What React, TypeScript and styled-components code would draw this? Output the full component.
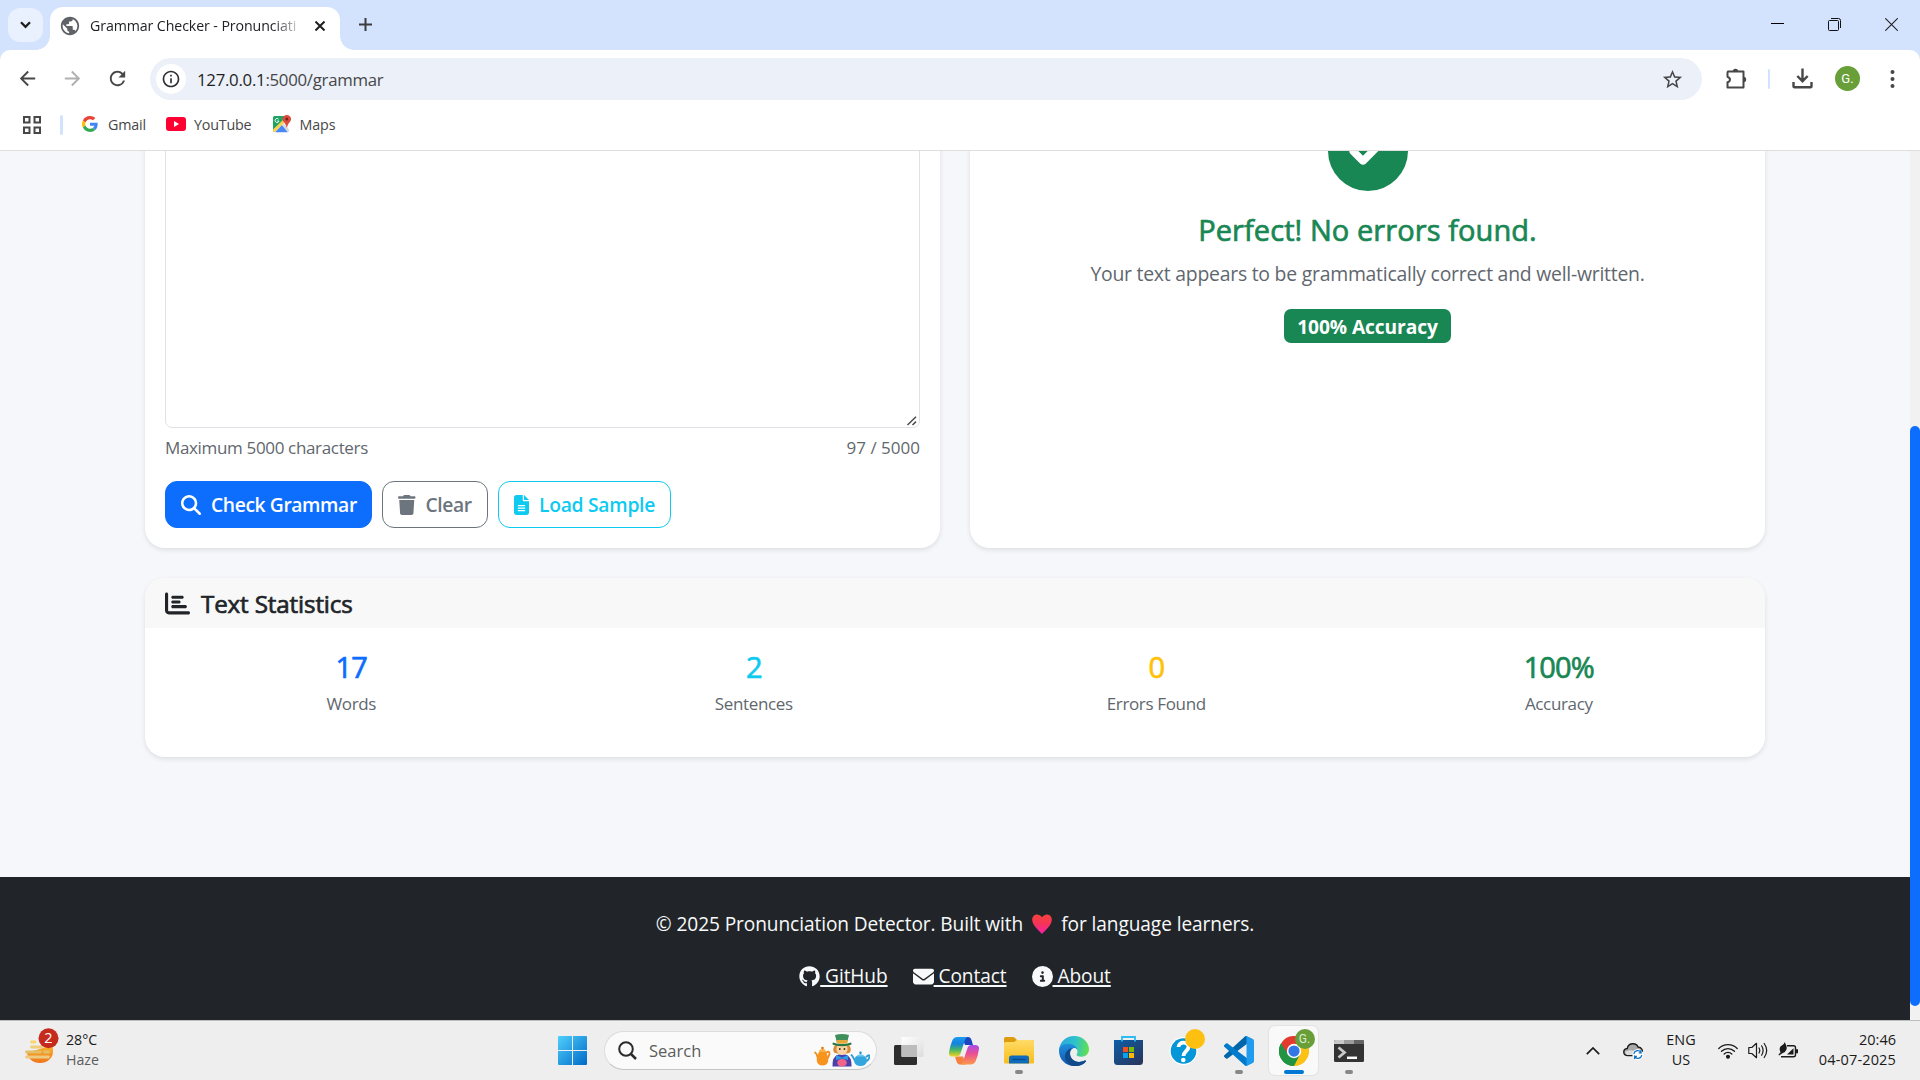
import React from 'react';
import styled, { createGlobalStyle } from 'styled-components';
import {
  FaMagnifyingGlass,
  FaTrash,
  FaFileLines,
  FaChartBar,
  FaGithub,
  FaEnvelope,
  FaCircleInfo,
  FaCircleCheck,
} from 'react-icons/fa6';
import { MdArrowBack, MdArrowForward, MdRefresh, MdStarBorder, MdInfoOutline, MdPublic } from 'react-icons/md';

const Global = createGlobalStyle`
  *, *::before, *::after { box-sizing: border-box; }
  html, body { margin: 0; padding: 0; overflow: hidden; }
  body { font-family: "Segoe UI", "Open Sans", "Noto Sans", sans-serif; color: #212529; }
  svg { display: block; flex: none; }
`;

const Screen = styled.div`
  width: 1920px;
  height: 1080px;
  display: flex;
  flex-direction: column;
  overflow: hidden;
  background: #fff;
`;

const Label = styled.span<{ $size: number; $track?: number; $weight?: number; $color?: string; $line?: number }>`
  font-size: ${(p) => p.$size}px;
  letter-spacing: ${(p) => p.$track ?? 0}px;
  font-weight: ${(p) => p.$weight ?? 400};
  color: ${(p) => p.$color ?? 'inherit'};
  line-height: ${(p) => (p.$line ? `${p.$line}px` : '1.4')};
  white-space: nowrap;
`;

/* Medium weight: regular outlines thickened by a thin stroke. */
const MediumLabel = styled(Label)`
  -webkit-text-stroke: 0.7px currentColor;
`;

/* ---------- browser frame ---------- */

const TabStrip = styled.div`
  height: 50px;
  background: #d3e2fd;
  display: flex;
  align-items: flex-start;
  padding-left: 8px;
`;

const TabSearch = styled.div`
  width: 35px;
  height: 34px;
  margin-top: 8px;
  border-radius: 12px;
  background: #e9f0fe;
  display: flex;
  align-items: center;
  justify-content: center;
`;

const Tab = styled.div`
  position: relative;
  width: 290px;
  height: 43px;
  margin: 7px 0 0 7px;
  padding: 0 10px 6px 9px;
  background: #fff;
  border-radius: 13px 13px 0 0;
  display: flex;
  align-items: center;
  color: #5f6368;

  &::before,
  &::after {
    content: '';
    position: absolute;
    bottom: 0;
    width: 14px;
    height: 14px;
  }
  &::before {
    left: -14px;
    background: radial-gradient(circle at 0 0, transparent 13.5px, #fff 14px);
  }
  &::after {
    right: -14px;
    background: radial-gradient(circle at 100% 0, transparent 13.5px, #fff 14px);
  }
`;

const TabTitle = styled.div`
  width: 212px;
  margin-left: 9px;
  font-size: 14.2px;
  letter-spacing: -0.1px;
  line-height: 24px;
  white-space: nowrap;
  color: #202124;
  mask-image: linear-gradient(90deg, #000 182px, rgba(0, 0, 0, 0.15) 210px);
`;

const TabClose = styled.div`
  margin-left: 13px;
`;

const NewTab = styled.div`
  margin: 18px 0 0 19px;
`;

const WindowButtons = styled.div`
  margin: 18px 22px 0 auto;
  display: flex;
  gap: 44px;
`;

const ToolbarWrap = styled.div`
  background: #d3e2fd;
`;

const Toolbar = styled.div`
  height: 58px;
  background: #fff;
  border-radius: 10px 10px 0 0;
  display: flex;
  align-items: center;
  padding: 0 20px 0 16px;
`;

const NavIcon = styled.div<{ $dim?: boolean }>`
  width: 23px;
  height: 23px;
  margin: -1px 22px 0 0;
  color: ${(p) => (p.$dim ? '#b0b0b0' : '#474747')};
`;

const Omnibox = styled.div`
  width: 1552px;
  height: 42px;
  border-radius: 21px;
  background: #ebf0f9;
  display: flex;
  align-items: center;
  padding: 0 18px 0 6px;
  margin-left: -1px;
`;

const SiteInfo = styled.div`
  width: 30px;
  height: 30px;
  border-radius: 50%;
  background: #fff;
  display: flex;
  align-items: center;
  justify-content: center;
  margin-right: 11px;
  color: #303134;
`;

const Url = styled.span`
  font-size: 16.8px;
  letter-spacing: -0.27px;
  color: #474747;
  b {
    font-weight: 400;
    color: #1f1f1f;
  }
`;

const StarSlot = styled.div`
  margin-left: auto;
  color: #474747;
`;

const ToolAction = styled.div<{ $ml: number }>`
  margin: -1px 0 0 ${(p) => p.$ml}px;
`;

const Divider = styled.div<{ $w?: number }>`
  width: ${(p) => p.$w ?? 2}px;
  height: 20px;
  border-radius: 2px;
  background: #d3e3fd;
`;

const Avatar = styled.div`
  width: 25px;
  height: 25px;
  border-radius: 50%;
  background: #689f38;
  color: #fff;
  font: 400 13px/25px Roboto, sans-serif;
  text-align: center;
`;

const Bookmarks = styled.div`
  height: 43px;
  display: flex;
  align-items: center;
  padding: 0 0 9px 23px;
  border-bottom: 1px solid #dedede;
  color: #474747;
`;

const Bookmark = styled.div<{ $ml: number; $gap: number }>`
  display: flex;
  align-items: center;
  margin-left: ${(p) => p.$ml}px;
  gap: ${(p) => p.$gap}px;

  span {
    padding-top: 1px;
  }
`;

/* ---------- page ---------- */

const Viewport = styled.div`
  height: 869px;
  display: flex;
  overflow: hidden;
`;

const Page = styled.main`
  width: 1910px;
  height: 869px;
  overflow: hidden;
  background: #f5f7fb;
  display: flex;
  flex-direction: column;
`;

const ScrollTrack = styled.div`
  width: 10px;
  background: #f1f1f1;
  padding-top: 275px;
`;

const ScrollThumb = styled.div`
  height: 580px;
  border-radius: 5px;
  background: #0d6efd;
`;

const Container = styled.div`
  width: 1620px;
  margin: -60px auto 0;
  flex: 1;
`;

const Columns = styled.div`
  display: grid;
  grid-template-columns: 1fr 1fr;
  gap: 30px;
`;

const Card = styled.section`
  background: #fff;
  border-radius: 20px;
  box-shadow: 0 2px 5px rgba(0, 0, 0, 0.1);
`;

const EditorCard = styled(Card)`
  height: 457px;
  padding: 20px;
`;

const TextBox = styled.div`
  height: 317px;
  border: 1px solid #dee2e6;
  border-radius: 7px;
  display: flex;
  align-items: flex-end;
  justify-content: flex-end;
  padding: 0 2px 1px 0;
`;

const Counter = styled.div`
  display: flex;
  justify-content: space-between;
  margin-top: 7px;
  height: 25px;
  color: #5f676e;
`;

const ButtonRow = styled.div`
  display: flex;
  gap: 10px;
  margin-top: 21px;
`;

const tones = {
  primary: ['#fff', '#0d6efd', '#0d6efd'],
  secondary: ['#6c757d', '#fff', '#6c757d'],
  info: ['#0dcaf0', '#fff', '#0dcaf0'],
} as const;

const Button = styled.button<{ $tone: keyof typeof tones; $w: number; $icon: number }>`
  width: ${(p) => p.$w}px;
  height: 47px;
  padding: 0 0 0 15px;
  display: flex;
  align-items: center;
  gap: 10px;
  font-family: inherit;
  border-radius: 12px;
  color: ${(p) => tones[p.$tone][0]};
  background: ${(p) => tones[p.$tone][1]};
  border: 1px solid ${(p) => tones[p.$tone][2]};

  svg {
    width: ${(p) => p.$icon}px;
    height: 20px;
  }
  span {
    padding-top: 1px;
  }
`;

const ResultCard = styled(Card)`
  height: 457px;
  padding-top: 20px;
  display: flex;
  flex-direction: column;
  align-items: center;
  color: #198754;
`;

const ResultTitle = styled.h4`
  margin: 21px 0 11px;
  font-size: 29px;
  font-weight: 400;
  line-height: 36px;
  letter-spacing: 0.08px;
  -webkit-text-stroke: 0.7px currentColor;
`;

const ResultText = styled.p`
  margin: 0 0 20px;
  font-size: 19.4px;
  letter-spacing: -0.24px;
  line-height: 30px;
  color: #5f676e;
`;

const Badge = styled.span`
  width: 167px;
  height: 34px;
  border-radius: 7px;
  background: #198754;
  color: #fff;
  font-size: 19.2px;
  letter-spacing: -0.1px;
  font-weight: 700;
  line-height: 35px;
  text-align: center;
`;

const StatsCard = styled(Card)`
  height: 179px;
  margin-top: 30px;
  overflow: hidden;
`;

const StatsHeader = styled.header`
  height: 50px;
  padding-left: 20px;
  background: #f8f8f8;
  display: flex;
  align-items: center;
  gap: 11px;

  span {
    padding-top: 1px;
  }
`;

const StatsGrid = styled.div`
  padding: 21px 5px;
  display: grid;
  grid-template-columns: repeat(4, 1fr);
`;

const Stat = styled.div`
  display: flex;
  flex-direction: column;
  align-items: center;
`;

const Footer = styled.footer`
  height: 143px;
  background: #212529;
  color: #f8f9fa;
  display: flex;
  flex-direction: column;
  align-items: center;
  padding-top: 32px;
`;

const FooterLine = styled.p`
  margin: 0;
  height: 30px;
  display: flex;
  align-items: center;
  gap: 9px;
  font-size: 19.1px;
  letter-spacing: -0.08px;
  white-space: nowrap;
`;

const FooterLinks = styled.div`
  margin-top: 22px;
  height: 30px;
  display: flex;
  gap: 25px;
`;

const FooterLink = styled.a`
  display: flex;
  align-items: center;
  font-size: 19.1px;
  letter-spacing: -0.08px;
  line-height: 30px;
  white-space: pre;
  color: #f8f9fa;
  span {
    text-decoration: underline;
    text-decoration-thickness: 2px;
    text-underline-offset: 2px;
    text-decoration-skip-ink: none;
  }
`;

/* ---------- taskbar ---------- */

const Taskbar = styled.div`
  height: 60px;
  background: #eee;
  border-top: 1px solid #bdbdbd;
  display: flex;
  align-items: center;
  color: #1b1b1b;
`;

const Weather = styled.div`
  width: 545px;
  padding-left: 24px;
  display: flex;
  align-items: center;
  gap: 6px;
`;

const Stack = styled.div<{ $align?: string; $w?: number }>`
  width: ${(p) => (p.$w ? `${p.$w}px` : 'auto')};
  margin-bottom: 1px;
  display: flex;
  flex-direction: column;
  align-items: ${(p) => p.$align ?? 'flex-start'};
`;

const AppCell = styled.div<{ $active?: boolean }>`
  position: relative;
  width: ${(p) => (p.$active ? 49 : 55)}px;
  margin: 0 ${(p) => (p.$active ? 3 : 0)}px;
  height: 49px;
  border-radius: 6px;
  background: ${(p) => (p.$active ? '#f9f9f9' : 'transparent')};
  box-shadow: ${(p) => (p.$active ? '0 0 0 1px #e3e3e3' : 'none')};
  display: flex;
  align-items: center;
  justify-content: center;
`;

const Running = styled.i<{ $active?: boolean }>`
  position: absolute;
  left: 50%;
  bottom: 1px;
  transform: translateX(-50%);
  width: ${(p) => (p.$active ? 20 : 8)}px;
  height: 4px;
  border-radius: 2px;
  background: ${(p) => (p.$active ? '#0078d4' : '#878787')};
`;

const AppBadge = styled.span<{ $bg: string }>`
  position: absolute;
  left: 50%;
  top: 3px;
  margin-left: 1px;
  width: 20px;
  height: 20px;
  border-radius: 50%;
  background: ${(p) => p.$bg};
  color: #dfe9d3;
  font: 400 12px/20px Roboto, sans-serif;
  text-align: center;
`;

const SearchBox = styled.div`
  width: 273px;
  height: 39px;
  margin: 0 4px;
  border-radius: 20px;
  background: #fafafa;
  border: 1px solid #dcdcdc;
  border-bottom-color: #c4c4c4;
  display: flex;
  align-items: center;
  padding: 0 6px 0 13px;
  gap: 12px;
`;

const SearchArt = styled.div`
  margin-left: auto;
`;

const Tray = styled.div`
  margin-left: auto;
  padding-right: 24px;
  display: flex;
  align-items: center;
`;

const TrayItem = styled.div<{ $w: number }>`
  width: ${(p) => p.$w}px;
  display: flex;
  justify-content: center;
`;

/* ---------- drawings ---------- */

const GoogleG = ({ size = 16 }: { size?: number }) => (
  <svg width={size} height={size} viewBox="0 0 48 48">
    <path fill="#EA4335" d="M24 9.500c3.540 0 6.710 1.220 9.210 3.600l6.850-6.850C35.900 2.380 30.470 0 24 0 14.620 0 6.510 5.380 2.560 13.220l7.980 6.190C12.430 13.720 17.740 9.500 24 9.500z" />
    <path fill="#4285F4" d="M46.980 24.550c0-1.570-.15-3.090-.38-4.550H24v9.020h12.940c-.58 2.960-2.260 5.480-4.780 7.180l7.730 6c4.510-4.180 7.090-10.360 7.090-17.650z" />
    <path fill="#FBBC05" d="M10.530 28.590c-.48-1.450-.76-2.990-.76-4.590s.27-3.140.76-4.590l-7.980-6.190C.92 16.460 0 20.120 0 24c0 3.880.92 7.540 2.560 10.780l7.970-6.190z" />
    <path fill="#34A853" d="M24 48c6.480 0 11.930-2.130 15.890-5.810l-7.730-6c-2.150 1.450-4.920 2.300-8.160 2.300-6.260 0-11.570-4.220-13.470-9.910l-7.980 6.190C6.510 42.620 14.620 48 24 48z" />
  </svg>
);

const YouTube = () => (
  <svg width="20" height="14" viewBox="0 0 20 14">
    <rect width="20" height="14" rx="3" fill="#ff0033" />
    <path d="M8 4v6l5-3z" fill="#fff" />
  </svg>
);

const MapsIcon = () => (
  <svg width="19" height="18" viewBox="0 0 19 18">
    <path d="M0 2.500Q0 1 1.500 1H13v3L1 17Q0 16.500 0 15.500z" fill="#1ea362" />
    <path d="M0 14.500 10 5l1.500 2.500L2 17H1Q0 17 0 15.500z" fill="#ffd04c" />
    <path d="M2 17.200 9 10l6 7.200z" fill="#4a89f3" />
    <path d="M9 10l1.500-1.500 5.500 6v1.300q0 1-1 1.400z" fill="#d5d9dc" />
    <path d="M13.800 0C11.500 0 9.600 1.800 9.600 4c0 3 3.300 4 4 8.500h.5c.6-4.500 4-5.500 4-8.500 0-2.200-1.900-4-4.300-4z" fill="#dd4b3e" />
    <circle cx="13.800" cy="4" r="1.500" fill="#7a231c" />
    <path d="M5.600 4.200A2 2 0 1 0 6 6H4.300" stroke="#fff" strokeWidth=".9" fill="none" />
  </svg>
);

const AppsGrid = () => (
  <svg width="18" height="18" viewBox="0 0 18 18" fill="none" stroke="#474747" strokeWidth="2">
    <path d="M1 1h5.500v5.500H1zM11.500 1H17v5.500h-5.500zM1 11.500h5.500V17H1zM11.500 11.500H17V17h-5.500z" />
  </svg>
);

const Puzzle = () => (
  <svg width="22" height="22" viewBox="0 0 22 22">
    <path d="M3 3.500h15.500v16H2.500v-5.200c3-.6 3.600-4.200 0-5.600V4.500Q2.500 3.500 3.500 3.500z" fill="none" stroke="#474747" strokeWidth="2" strokeLinejoin="round" />
    <path d="M7.800 3.500a2.700 2.700 0 0 1 5.400 0zM18.500 8.700a2.700 2.700 0 0 1 0 5.400z" fill="#474747" />
  </svg>
);

const Download = () => (
  <svg width="21" height="21" viewBox="0 0 21 21" fill="none" stroke="#474747" strokeWidth="2.400">
    <path d="M10.500.5v12M5.300 8l5.200 5.200L15.700 8M1.500 14v4.200q0 1 1 1h16q1 0 1-1V14" />
  </svg>
);

const Heart = () => (
  <svg width="20" height="21" viewBox="0 0 21 21">
    <defs>
      <linearGradient id="heart" x1="0" y1="0" x2="0" y2="1">
        <stop offset="0" stopColor="#f8433b" />
        <stop offset=".5" stopColor="#f4325a" />
        <stop offset="1" stopColor="#f91fae" />
      </linearGradient>
    </defs>
    <path d="M10.500 3C12 .8 14 0 15.800 0 18.500 0 20.800 2.200 20.800 5.500c0 6-6.800 11-10.300 15C7 16.500.2 11.500.2 5.500.2 2.200 2.500 0 5.200 0 7 0 9 .8 10.500 3z" fill="url(#heart)" />
  </svg>
);

const HazeIcon = () => (
  <svg width="36" height="48" viewBox="0 -4 36 48">
    <defs>
      <linearGradient id="haze" x1="0" y1="0" x2="0" y2="1">
        <stop offset="0" stopColor="#fbc02d" />
        <stop offset="1" stopColor="#f0741c" />
      </linearGradient>
    </defs>
    <path d="M3 21a13 11 0 0 0 26 0c0-4 0-6-1.500-9l-6 4-9 3z" fill="url(#haze)" />
    <g strokeLinecap="round" strokeWidth="2.800" fill="none">
      <path d="M7.500 11h3.500" stroke="#fbd568" />
      <path d="M7.500 16h10" stroke="#f0cd78" />
      <path d="M2.500 21h14M20.500 21h4" stroke="#e2c06a" />
      <path d="M2.500 26h22" stroke="#ecca80" />
    </g>
    <circle cx="24.500" cy="7.200" r="10" fill="#c42b1c" />
    <text x="24.500" y="12.400" textAnchor="middle" fontSize="14.500" fill="#fff" fontFamily="Open Sans, sans-serif">2</text>
  </svg>
);

const WindowsLogo = () => (
  <svg width="29" height="29" viewBox="0 0 29 29">
    <defs>
      <linearGradient id="win" x1="0" y1="0" x2="1" y2="1">
        <stop offset="0" stopColor="#4fd0fb" />
        <stop offset="1" stopColor="#0069c8" />
      </linearGradient>
    </defs>
    <path d="M1 0h13v14H0V1Q0 0 1 0zM15 0h13q1 0 1 1v13H15zM0 15h14v14H1q-1 0-1-1zM15 15h14v13q0 1-1 1H15z" fill="url(#win)" />
  </svg>
);

const Hatter = () => (
  <svg width="56" height="33" viewBox="0 0 56 33">
    <path d="M4 26Q3.500 20 .5 18M12 19q4-3 3.500 1-1 4-3.500 6" stroke="#ef8c16" strokeWidth="1.800" fill="none" />
    <path d="M5 18h7q3 6 2 10-1.500 3.500-5.500 3.500T3 28q-1-4 2-10z" fill="#f7941d" />
    <path d="M5 18q0-3 3.500-3T12 18z" fill="#fbb040" />
    <circle cx="8.500" cy="14" r="1.300" fill="#d97911" />
    <path d="M18.500 32.500q-.5-10 6-12h7q6.500 2 6 12z" fill="#4b3fa8" />
    <path d="M21 11q-3 4-1 7.500l3 1h10l3-1q2-3.500-1-7.500z" fill="#d98b36" />
    <ellipse cx="28" cy="15" rx="5.600" ry="6" fill="#fbd4a6" />
    <circle cx="25.800" cy="15" r=".9" fill="#3a2a1c" />
    <circle cx="30.400" cy="15" r=".9" fill="#3a2a1c" />
    <path d="M21 1q7-2 14 0l-2 8H23z" fill="#3f8f5c" />
    <path d="M22.400 6h11.400l-.8 3.500H23z" fill="#e7a93a" />
    <path d="M19 8.500q9 3 18 0 1.500 2-1 2.500-8 2.500-16 0-2.500-.5-1-2.500z" fill="#2a7a48" />
    <path d="M22 21l6 2.500 6-2.500v5l-6-1.500-6 1.500z" fill="#2c9be8" />
    <ellipse cx="28" cy="28.800" rx="4.800" ry="3.800" fill="#f0648c" />
    <path d="M41 27q-2-5-4-6.500M52 23q4-3.500 3.500 0-.5 3-3.500 4.500" stroke="#2e9bd6" strokeWidth="1.800" fill="none" />
    <ellipse cx="46.500" cy="26.500" rx="6.500" ry="5.500" fill="#33a6dd" />
    <path d="M42 22.500q4.500-5 9 0z" fill="#6ccbf0" />
    <circle cx="46.500" cy="18.800" r="1.200" fill="#2388c4" />
  </svg>
);

const TaskView = () => (
  <svg width="30" height="28" viewBox="0 0 30 28">
    <defs>
      <linearGradient id="tv" x1="0" y1="0" x2="1" y2="1">
        <stop offset="0" stopColor="#fff" />
        <stop offset="1" stopColor="#dcdcdc" />
      </linearGradient>
    </defs>
    <rect x="0" y="8" width="23" height="20" rx="1.500" fill="#2d2d2d" />
    <rect x="7.500" y="0" width="22" height="20" rx="1" fill="url(#tv)" />
    <path d="M7.500 8H23v12H8.500q-1 0-1-1z" fill="#bcbcbc" />
  </svg>
);

const Copilot = () => (
  <svg width="30" height="28" viewBox="0 0 30 28">
    <defs>
      <linearGradient id="cpA" x1="0" y1="0" x2="0" y2="1">
        <stop offset="0" stopColor="#1b9af0" />
        <stop offset=".35" stopColor="#1583de" />
        <stop offset=".65" stopColor="#45b568" />
        <stop offset="1" stopColor="#f5d31d" />
      </linearGradient>
      <linearGradient id="cpB" x1="0" y1="0" x2="0" y2="1">
        <stop offset="0" stopColor="#a54bea" />
        <stop offset=".45" stopColor="#ec4f93" />
        <stop offset="1" stopColor="#fb9a48" />
      </linearGradient>
    </defs>
    <path d="M13 0h6q2.500 0 3.500 3l1.500 5h-8z" fill="#1a46c0" />
    <path d="M17 27.500h-6q-2.500 0-3.500-3L6 19.500h8z" fill="#f4813d" />
    <path d="M8.500 0H19q-2 0-3 3l-4.500 13.500q-1 3-4 3H4q-4.500 0-4-4Q1 8.500 3.500 3 5 0 8.500 0z" fill="url(#cpA)" />
    <path d="M21.500 27.500H11q2 0 3-3L18.500 11q1-3 4-3H26q4.500 0 4 4-1 7-3.500 12.500-1.500 3-5 3z" fill="url(#cpB)" />
  </svg>
);

const Explorer = () => (
  <svg width="30" height="27" viewBox="0 0 30 27">
    <defs>
      <linearGradient id="fold" x1="0" y1="0" x2="0" y2="1">
        <stop offset="0" stopColor="#ffdb68" />
        <stop offset="1" stopColor="#f9bd1b" />
      </linearGradient>
    </defs>
    <path d="M0 1.500Q0 0 1.500 0H9q1 0 2 1l2 2h15.500q1.500 0 1.500 1.500V10H0z" fill="#dd9c0c" />
    <path d="M0 6.500Q0 5 1.500 5H10l3-2h15.500Q30 3 30 4.500v21q0 1-1 1H1q-1 0-1-1z" fill="url(#fold)" />
    <path d="M5 26.500V21q0-2.500 2.500-2.500h15Q25 18.500 25 21v5.500z" fill="#0f6cbd" />
    <path d="M8.500 22.500h13" stroke="#0a4a8b" strokeWidth="1.300" />
  </svg>
);

const Edge = () => (
  <svg width="30" height="30" viewBox="0 0 256 256">
    <defs>
      <linearGradient id="edA" x1="0" y1=".3" x2="1" y2=".4">
        <stop offset="0" stopColor="#2aa5e0" />
        <stop offset=".55" stopColor="#2fc3c9" />
        <stop offset="1" stopColor="#63e04f" />
      </linearGradient>
      <linearGradient id="edB" x1="0" y1="0" x2="0" y2="1">
        <stop offset="0" stopColor="#1f90dc" />
        <stop offset="1" stopColor="#1155ae" />
      </linearGradient>
    </defs>
    <path d="M0 120C6 50 60 0 128 0c74 0 128 54 128 112 0 38-28 64-64 64-30 0-42-8-42-16 0-6 8-10 8-26 0-24-22-46-58-46-46 0-88 22-100 32z" fill="url(#edA)" />
    <path d="M0 128C0 92 34 66 78 66c38 0 72 20 78 52-8-14-24-18-36-12-32 14-32 60-10 88 26 34 74 34 110 16 8-4 14 2 8 10-22 28-60 38-98 36C56 254 0 200 0 128z" fill="url(#edB)" />
    <path d="M94 248c-34-22-50-60-40-94 8-28 32-48 60-50-26 16-28 58-6 88 26 34 74 36 112 18 8-4 14 2 8 10-24 30-84 50-134 28z" fill="#114a8b" />
  </svg>
);

const Store = () => (
  <svg width="29" height="29" viewBox="0 0 29 29">
    <defs>
      <linearGradient id="sto" x1="0" y1="0" x2="1" y2="1">
        <stop offset="0" stopColor="#0c5ea8" />
        <stop offset="1" stopColor="#2b3358" />
      </linearGradient>
    </defs>
    <path d="M0 4h29v21.500q0 3.500-3.500 3.500h-22Q0 29 0 25.500z" fill="url(#sto)" />
    <path d="M8 5.500V1h13v4.500" fill="none" stroke="#2cbcf2" strokeWidth="1.800" />
    <path d="M9 11h5v5H9z" fill="#f25022" />
    <path d="M15 11h5v5h-5z" fill="#7fba00" />
    <path d="M9 17h5v5H9z" fill="#00a4ef" />
    <path d="M15 17h5v5h-5z" fill="#ffb900" />
  </svg>
);

const Help = () => (
  <svg width="30" height="30" viewBox="0 0 30 30">
    <circle cx="14.500" cy="15" r="14" fill="#fff" />
    <circle cx="14.500" cy="15" r="12.800" fill="#0596d8" />
    <path d="M9.500 11c0-6 10.500-5.500 10 0-.3 4-5 4.500-5 9" stroke="#fff" strokeWidth="3.800" fill="none" />
    <circle cx="14.300" cy="24" r="2.300" fill="#fff" />
  </svg>
);

const VsCode = () => (
  <svg width="30" height="30" viewBox="0 0 100 100">
    <path d="M96 10.800 75.800 1a6 6 0 0 0-7 1.200L1.200 64a4 4 0 0 0 0 6l5.500 5a4 4 0 0 0 5.200.2L93.400 13.500C96 11.400 100 13.300 100 16.700v-.2c0-2.500-1.400-4.700-4-5.700z" fill="#0065a9" />
    <path d="M96 89.200 75.800 99a6 6 0 0 1-7-1.200L1.200 36a4 4 0 0 1 0-6l5.500-5a4 4 0 0 1 5.200-.2l81.500 61.700c2.700 2.100 6.600.2 6.600-3.200v.2c0 2.500-1.400 4.700-4 5.700z" fill="#007acc" />
    <path d="M75.900 99a6 6 0 0 1-7.100-1.200c2.300 2.300 6.200.7 6.200-2.600V4.800c0-3.300-3.900-4.900-6.200-2.600A6 6 0 0 1 75.900 1l20.600 10A6 6 0 0 1 100 16.500v67a6 6 0 0 1-3.500 5.500z" fill="#1f9cf0" />
  </svg>
);

const Chrome = () => (
  <svg width="30" height="30" viewBox="0 0 48 48">
    <path d="M24 24 3.200 12A24 24 0 0 1 44.800 12z" fill="#e33b2e" />
    <path d="M24 24 44.800 12A24 24 0 0 1 24 48z" fill="#fbc116" />
    <path d="M24 24v0L24 48A24 24 0 0 1 3.200 12z" fill="#229342" />
    <path d="M24 13h20.800A24 24 0 0 1 24 48l9.500-18.500z" fill="#fbc116" />
    <path d="M3.200 12 14.500 29.500 24 13z" fill="#e33b2e" />
    <path d="M3.200 12 14.500 29.500 33.500 29.500 24 48A24 24 0 0 1 3.200 12z" fill="#229342" />
    <circle cx="24" cy="24" r="11.500" fill="#fff" />
    <circle cx="24" cy="24" r="9" fill="#3377e6" />
  </svg>
);

const Terminal = () => (
  <svg width="30" height="22" viewBox="0 0 30 22">
    <rect width="30" height="22" rx="1.500" fill="#333" />
    <path d="M1.500 0H10v4H0V1.500Q0 0 1.500 0z" fill="#c8c8c8" />
    <path d="M10 0h10v4H10z" fill="#9c9c9c" />
    <path d="M20 0h8.500Q30 0 30 1.500V4H20z" fill="#646464" />
    <path d="M4.500 7.500l6 5-6 5" stroke="#c9c9c9" strokeWidth="2.800" fill="none" />
    <path d="M13 17.800h10" stroke="#fff" strokeWidth="2.500" />
  </svg>
);

const CloudSync = () => (
  <svg width="21" height="18" viewBox="0 0 21 18">
    <path d="M5 13.500c-5.500 0-5.500-6.500-.7-7C5 1 13 0 15 5c4 0 5 4 4 6l-3 2.500z" fill="#a9a9a9" stroke="#1d1d1d" strokeWidth="1.400" />
    <path d="M2 10q4-3 9-1l-2 4H4z" fill="#dcdcdc" />
    <circle cx="14.800" cy="12.500" r="5.500" fill="#fff" />
    <path d="M10.800 11.800a4 4 0 0 1 7.200-1.500V8M18.800 13.200a4 4 0 0 1-7.200 1.500V17M18 10.800h-2.300M11.600 14.400h2.300" stroke="#1272c4" strokeWidth="1.300" fill="none" />
  </svg>
);

const Wifi = () => (
  <svg width="20" height="16" viewBox="0 0 20 16" fill="none" stroke="#1b1b1b" strokeWidth="1.300" strokeLinecap="round">
    <path d="M.8 5.500a13 13 0 0 1 18.400 0M3.500 8.300a9.200 9.200 0 0 1 13 0M6.200 11a5.400 5.400 0 0 1 7.600 0" />
    <circle cx="10" cy="13.800" r="1.400" fill="#1b1b1b" />
  </svg>
);

const Sound = () => (
  <svg width="20" height="17" viewBox="0 0 20 17" fill="none" stroke="#1b1b1b" strokeWidth="1.200" strokeLinecap="round" strokeLinejoin="round">
    <path d="M.8 5.500h3L8.500 1.300v14.400L3.800 11.500h-3zM11 6q1.500 2.500 0 5M13.600 3.800q3 4.700 0 9.400M16.200 1.500q5 7 0 14" />
  </svg>
);

const Battery = () => (
  <svg width="20" height="17" viewBox="0 0 20 17">
    <path d="M9 3.800h6.500q2 0 2 2v7q0 2-2 2H3" fill="none" stroke="#1b1b1b" strokeWidth="1.400" />
    <rect x="18" y="7" width="2" height="4.500" rx="1" fill="#1b1b1b" />
    <path d="M15.500 6.300v6.200H9z" fill="#1b1b1b" />
    <path d="M6.500 0q3 4.500 2 7.500-1 3-4.500 4l-3 2-.5-1 2-2Q0 5 4.500 3q2-1 2-3z" fill="#1b1b1b" />
  </svg>
);

const stats = [
  { value: '17', label: 'Words', color: '#0d6efd' },
  { value: '2', label: 'Sentences', color: '#0dcaf0' },
  { value: '0', label: 'Errors Found', color: '#ffc107' },
  { value: '100%', label: 'Accuracy', color: '#198754' },
];

const apps: { icon: React.ReactNode; running?: boolean; active?: boolean; badge?: string; text?: string }[] = [
  { icon: <TaskView /> },
  { icon: <Copilot /> },
  { icon: <Explorer />, running: true },
  { icon: <Edge /> },
  { icon: <Store /> },
  { icon: <Help />, badge: '#fdc010' },
  { icon: <VsCode />, running: true },
  { icon: <Chrome />, running: true, active: true, badge: '#689f38', text: 'G.' },
  { icon: <Terminal />, running: true },
];

const BrowserFrame = () => (
  <>
    <TabStrip>
      <TabSearch>
        <svg width="11" height="8" viewBox="0 0 11 8" fill="none" stroke="#1f1f1f" strokeWidth="2.300">
          <path d="M1 1.300l4.500 4.500L10 1.300" />
        </svg>
      </TabSearch>
      <Tab>
        <MdPublic size={22} />
        <TabTitle>Grammar Checker - Pronunciati</TabTitle>
        <TabClose>
          <svg width="10" height="10" viewBox="0 0 10 10" stroke="#1f1f1f" strokeWidth="2">
            <path d="M.5.5l9 9M9.500.5l-9 9" />
          </svg>
        </TabClose>
      </Tab>
      <NewTab>
        <svg width="13" height="13" viewBox="0 0 13 13" stroke="#3c3c3c" strokeWidth="2">
          <path d="M6.500 0v13M0 6.500h13" />
        </svg>
      </NewTab>
      <WindowButtons>
        <svg width="13" height="13" viewBox="0 0 13 13">
          <path d="M0 5.500h13" stroke="#000" />
        </svg>
        <svg width="13" height="13" viewBox="0 0 13 13" fill="none" stroke="#111">
          <rect x=".5" y="2.500" width="10" height="10" rx="1" />
          <path d="M3 .5h7.500q2 0 2 2V10" />
        </svg>
        <svg width="13" height="13" viewBox="0 0 13 13" stroke="#222" strokeWidth="1.100">
          <path d="M.3.3l12.400 12.400M12.700.3L.3 12.700" />
        </svg>
      </WindowButtons>
    </TabStrip>
    <ToolbarWrap>
      <Toolbar>
        <NavIcon><MdArrowBack size={23} /></NavIcon>
        <NavIcon $dim><MdArrowForward size={23} /></NavIcon>
        <NavIcon><MdRefresh size={23} /></NavIcon>
        <Omnibox>
          <SiteInfo><MdInfoOutline size={20} /></SiteInfo>
          <Url><b>127.0.0.1</b>:5000/grammar</Url>
          <StarSlot><MdStarBorder size={23} /></StarSlot>
        </Omnibox>
        <ToolAction $ml={23}><Puzzle /></ToolAction>
        <ToolAction $ml={21}><Divider /></ToolAction>
        <ToolAction $ml={22}><Download /></ToolAction>
        <ToolAction $ml={22}><Avatar>G.</Avatar></ToolAction>
        <StarSlot>
          <svg width="16" height="20" viewBox="0 0 16 20" fill="#474747">
            <circle cx="8.500" cy="3" r="2" />
            <circle cx="8.500" cy="10" r="2" />
            <circle cx="8.500" cy="17" r="2" />
          </svg>
        </StarSlot>
      </Toolbar>
    </ToolbarWrap>
    <Bookmarks>
      <AppsGrid />
      <Bookmark $ml={19} $gap={0}><Divider $w={3} /></Bookmark>
      <Bookmark $ml={19} $gap={10}>
        <GoogleG />
        <Label $size={14.3} $track={-0.15}>Gmail</Label>
      </Bookmark>
      <Bookmark $ml={20} $gap={8}>
        <YouTube />
        <Label $size={14.3} $track={-0.2}>YouTube</Label>
      </Bookmark>
      <Bookmark $ml={22} $gap={7}>
        <MapsIcon />
        <Label $size={14.3} $track={-0.1}>Maps</Label>
      </Bookmark>
    </Bookmarks>
  </>
);

const TaskbarView = () => (
  <Taskbar>
    <Weather>
      <HazeIcon />
      <Stack>
        <Label $size={14.2} $line={20}>28°C</Label>
        <Label $size={14.2} $line={20} $color="#5c5c5c">Haze</Label>
      </Stack>
    </Weather>
    <AppCell><WindowsLogo /></AppCell>
    <SearchBox>
      <svg width="19" height="19" viewBox="0 0 19 19" fill="none" stroke="#2b2b2b" strokeWidth="2">
        <circle cx="8" cy="8" r="6.800" />
        <path d="M13 13l5 5" strokeWidth="2.500" />
      </svg>
      <Label $size={16.5} $color="#5c5c5c">Search</Label>
      <SearchArt><Hatter /></SearchArt>
    </SearchBox>
    {apps.map((a, i) => (
      <AppCell key={i} $active={a.active}>
        {a.icon}
        {a.badge && <AppBadge $bg={a.badge}>{a.text}</AppBadge>}
        {a.running && <Running $active={a.active} />}
      </AppCell>
    ))}
    <Tray>
      <TrayItem $w={40}>
        <svg width="14" height="8" viewBox="0 0 14 8" fill="none" stroke="#1b1b1b" strokeWidth="1.700">
          <path d="M.8 7.200L7 1l6.200 6.200" />
        </svg>
      </TrayItem>
      <TrayItem $w={40}><CloudSync /></TrayItem>
      <Stack $align="center" $w={56}>
        <Label $size={14.4} $line={20}>ENG</Label>
        <Label $size={14.4} $line={20}>US</Label>
      </Stack>
      <TrayItem $w={38}><Wifi /></TrayItem>
      <TrayItem $w={22}><Sound /></TrayItem>
      <TrayItem $w={38}><Battery /></TrayItem>
      <Stack $align="flex-end" $w={89}>
        <Label $size={14.5} $line={20}>20:46</Label>
        <Label $size={14.5} $track={0.15} $line={20}>04-07-2025</Label>
      </Stack>
    </Tray>
  </Taskbar>
);

export default function App() {
  return (
    <Screen>
      <Global />
      <BrowserFrame />
      <Viewport>
        <Page>
          <Container>
            <Columns>
              <EditorCard>
                <TextBox>
                  <svg width="10" height="10" viewBox="0 0 10 10" stroke="#4a4a4a" strokeWidth="1.500">
                    <path d="M.5 9L9 .8M5.500 9L9 5.600" />
                  </svg>
                </TextBox>
                <Counter>
                  <Label $size={17} $track={-0.34} $line={25}>Maximum 5000 characters</Label>
                  <Label $size={17} $line={25}>97 / 5000</Label>
                </Counter>
                <ButtonRow>
                  <Button $tone="primary" $w={207} $icon={20}>
                    <FaMagnifyingGlass />
                    <Label $size={19.3} $track={-0.4} $weight={600}>Check Grammar</Label>
                  </Button>
                  <Button $tone="secondary" $w={106} $icon={17.5}>
                    <FaTrash />
                    <Label $size={19.3} $track={-0.4} $weight={600}>Clear</Label>
                  </Button>
                  <Button $tone="info" $w={173} $icon={15}>
                    <FaFileLines />
                    <Label $size={19.3} $track={-0.28} $weight={600}>Load Sample</Label>
                  </Button>
                </ButtonRow>
              </EditorCard>
              <ResultCard>
                <FaCircleCheck size={80} />
                <ResultTitle>Perfect! No errors found.</ResultTitle>
                <ResultText>Your text appears to be grammatically correct and well-written.</ResultText>
                <Badge>100% Accuracy</Badge>
              </ResultCard>
            </Columns>
            <StatsCard>
              <StatsHeader>
                <FaChartBar size={25} />
                <MediumLabel $size={24.2} $track={-0.15}>Text Statistics</MediumLabel>
              </StatsHeader>
              <StatsGrid>
                {stats.map((s) => (
                  <Stat key={s.label}>
                    <MediumLabel $size={29} $track={-0.9} $color={s.color} $line={36}>{s.value}</MediumLabel>
                    <Label $size={17} $track={-0.35} $color="#5f676e" $line={38}>{s.label}</Label>
                  </Stat>
                ))}
              </StatsGrid>
            </StatsCard>
          </Container>
          <Footer>
            <FooterLine>
              <span>© 2025 Pronunciation Detector. Built with</span>
              <Heart />
              <span>for language learners.</span>
            </FooterLine>
            <FooterLinks>
              <FooterLink><FaGithub size={21} /><span> GitHub</span></FooterLink>
              <FooterLink><FaEnvelope size={21} /><span> Contact</span></FooterLink>
              <FooterLink><FaCircleInfo size={21} /><span> About</span></FooterLink>
            </FooterLinks>
          </Footer>
        </Page>
        <ScrollTrack><ScrollThumb /></ScrollTrack>
      </Viewport>
      <TaskbarView />
    </Screen>
  );
}
